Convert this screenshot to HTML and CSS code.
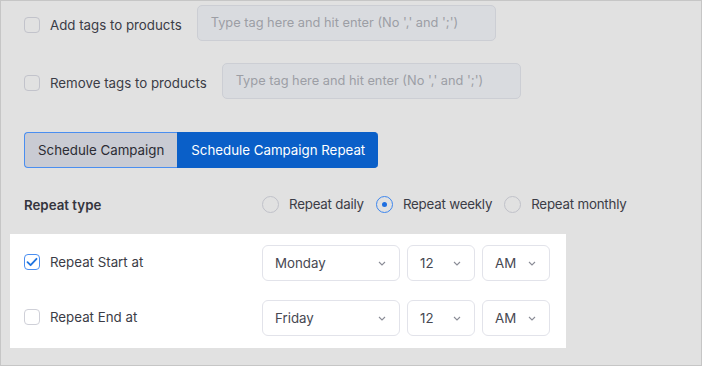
FILE: index.html
```html
<!DOCTYPE html>
<html>
<head>
<meta charset="utf-8">
<link rel="stylesheet" href="styles.css">
</head>
<body>
<div class="frame">
  <div class="tag-row first">
    <span class="check"></span>
    <span class="label">Add tags to products</span>
    <div class="tag-input">Type tag here and hit enter (No ',' and ';')</div>
  </div>
  <div class="tag-row second">
    <span class="check"></span>
    <span class="label">Remove tags to products</span>
    <div class="tag-input">Type tag here and hit enter (No ',' and ';')</div>
  </div>

  <div class="tabs">
    <div class="tab">Schedule Campaign</div>
    <div class="tab active">Schedule Campaign Repeat</div>
  </div>

  <div class="type-row">
    <div class="type-label">Repeat type</div>
    <div class="radios">
      <span class="radio"></span><span class="rlabel">Repeat daily</span>
      <span class="radio on"></span><span class="rlabel">Repeat weekly</span>
      <span class="radio"></span><span class="rlabel">Repeat monthly</span>
    </div>
  </div>

  <div class="panel">
    <div class="prow">
      <div class="pleft">
        <span class="check checked">
          <svg width="12" height="10" viewBox="0 0 12 10"><path d="M1.5 5.2 L4.6 8.2 L10.5 1.8" fill="none" stroke="#1f74e0" stroke-width="1.8" stroke-linecap="round" stroke-linejoin="round"/></svg>
        </span>
        <span class="label">Repeat Start at</span>
      </div>
      <div class="selects">
        <div class="select wide"><span>Monday</span><svg class="chev" width="8" height="5" viewBox="0 0 8 5"><path d="M1 1 L4 4 L7 1" fill="none" stroke="#8a8c96" stroke-width="1.1"/></svg></div>
        <div class="select"><span>12</span><svg class="chev" width="8" height="5" viewBox="0 0 8 5"><path d="M1 1 L4 4 L7 1" fill="none" stroke="#8a8c96" stroke-width="1.1"/></svg></div>
        <div class="select"><span>AM</span><svg class="chev" width="8" height="5" viewBox="0 0 8 5"><path d="M1 1 L4 4 L7 1" fill="none" stroke="#8a8c96" stroke-width="1.1"/></svg></div>
      </div>
    </div>
    <div class="prow">
      <div class="pleft">
        <span class="check white"></span>
        <span class="label">Repeat End at</span>
      </div>
      <div class="selects">
        <div class="select wide"><span>Friday</span><svg class="chev" width="8" height="5" viewBox="0 0 8 5"><path d="M1 1 L4 4 L7 1" fill="none" stroke="#8a8c96" stroke-width="1.1"/></svg></div>
        <div class="select"><span>12</span><svg class="chev" width="8" height="5" viewBox="0 0 8 5"><path d="M1 1 L4 4 L7 1" fill="none" stroke="#8a8c96" stroke-width="1.1"/></svg></div>
        <div class="select"><span>AM</span><svg class="chev" width="8" height="5" viewBox="0 0 8 5"><path d="M1 1 L4 4 L7 1" fill="none" stroke="#8a8c96" stroke-width="1.1"/></svg></div>
      </div>
    </div>
  </div>
</div>
</body>
</html>
```
FILE: styles.css
```css
* { box-sizing: border-box; }
html, body { margin: 0; padding: 0; }
body {
  font-family: "Inter", "Open Sans", sans-serif;
  font-size: 13.3px;
  color: #3b3c46;
}
.frame {
  width: 702px;
  height: 366px;
  border: 1px solid #c6c6c6;
  background: #e1e1e1;
  padding: 3px 0 0 9px;
  overflow: hidden;
}
.tag-row {
  display: flex;
  align-items: center;
  height: 36px;
  padding-left: 14px;
}
.tag-row.second { margin-top: 22px; }
.tag-row .check,
.tag-row .label { margin-top: 6px; }
.check {
  width: 16px;
  height: 16px;
  border: 1px solid #c2c3cb;
  border-radius: 4px;
  flex: none;
  display: flex;
  align-items: center;
  justify-content: center;
}
.check.white { background: #fff; border-color: #cfd0d8; }
.check.checked { background: #fff; border-color: #4a8ef0; }
.label {
  margin-left: 10px;
  white-space: nowrap;
}
.tag-input {
  margin-left: 15px;
  width: 299px;
  height: 36px;
  background: #d9dbdf;
  border: 1px solid #ccced4;
  border-radius: 5px;
  padding-left: 13px;
  display: flex;
  align-items: center;
  color: #9c9ea5;
  font-size: 12.8px;
  white-space: nowrap;
  margin-top: 1px;
}
.tabs {
  display: flex;
  margin: 34px 0 0 14px;
  width: max-content;
  height: 36px;
}
.tab {
  display: flex;
  align-items: center;
  padding: 0 13px;
  background: #c9cbd3;
  border: 1px solid #4a8ef0;
  border-right: none;
  border-radius: 4px 0 0 4px;
  color: #2b2c33;
  white-space: nowrap;
}
.tab.active {
  background: #0a5fc8;
  border-color: #0a5fc8;
  border-radius: 0 4px 4px 0;
  color: #fff;
}
.type-row {
  display: grid;
  grid-template-columns: 238px auto;
  align-items: center;
  margin: 26px 0 0 14px;
  height: 20px;
}
.type-label {
  font-weight: 600;
  color: #34353e;
  margin-top: 2px;
}
.radios {
  display: flex;
  align-items: center;
}
.radio {
  width: 17px;
  height: 17px;
  border: 1px solid #c0c1c9;
  border-radius: 50%;
  flex: none;
  position: relative;
}
.radio.on { border-color: #3d86ee; }
.radio.on::after {
  content: "";
  position: absolute;
  left: 5px;
  top: 5px;
  width: 5px;
  height: 5px;
  border-radius: 50%;
  background: #1f6fe0;
}
.rlabel {
  margin: 0 12px 0 10px;
  white-space: nowrap;
  letter-spacing: -0.2px;
}
.panel {
  margin-top: 20px;
  width: 556px;
  height: 114px;
  background: #fff;
  padding: 11px 16px 0 14px;
}
.prow {
  display: grid;
  grid-template-columns: 238px auto;
  height: 36px;
}
.prow + .prow { margin-top: 19px; }
.pleft {
  display: flex;
  align-items: center;
  margin-top: -3px;
}
.selects {
  display: flex;
  gap: 7px;
}
.select {
  width: 68px;
  height: 36px;
  border: 1px solid #e2e3ea;
  border-radius: 6px;
  display: flex;
  align-items: center;
  justify-content: space-between;
  padding: 0 13px 0 12px;
  color: #474852;
}
.select.wide { width: 138px; padding-left: 12px; }
.chev { flex: none; margin-top: 1px; }
```
